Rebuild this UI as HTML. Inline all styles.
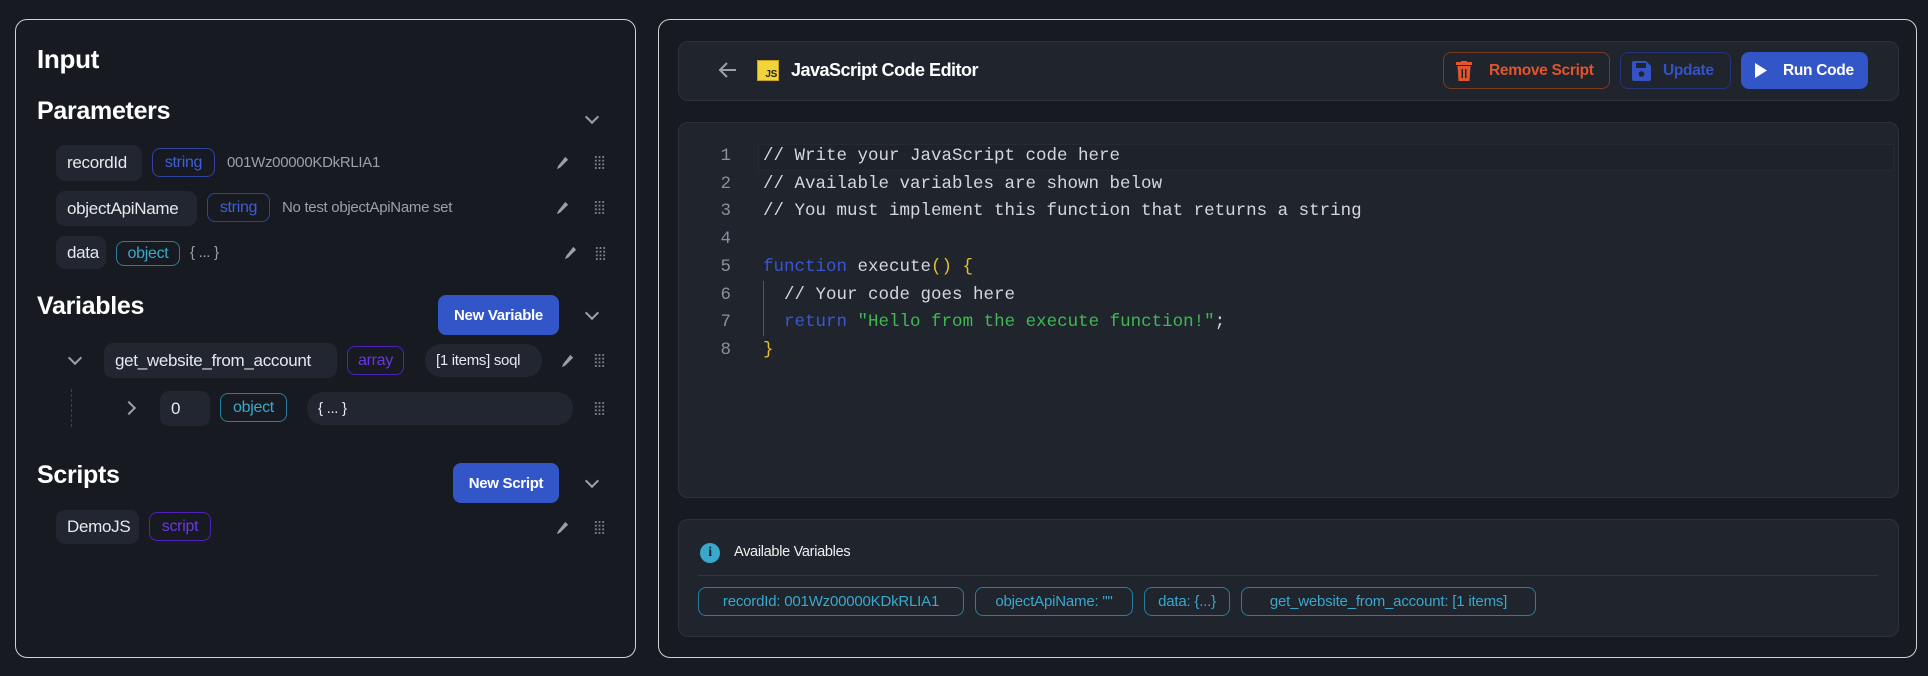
<!DOCTYPE html>
<html><head><meta charset="utf-8"><style>
*{box-sizing:border-box;margin:0;padding:0}
body{width:1928px;height:676px;background:#171a21;font-family:"Liberation Sans Narrow","Liberation Sans",sans-serif;color:#e8eaed;position:relative;overflow:hidden;letter-spacing:-0.3px}
.a{position:absolute}
.panel{position:absolute;border:1px solid #cfd2d6;border-radius:12px}
.h{position:absolute;font-weight:bold;color:#fff;font-size:26px;line-height:1}
.pill{position:absolute;background:#212630;border-radius:9px;font-size:17px;color:#e6e8eb;display:flex;align-items:center;padding-left:11px}
.badge{position:absolute;border:1px solid;border-radius:8px;font-size:16px;display:flex;align-items:center;justify-content:center}
.blue{border-color:#2f44a0;color:#3d5fd8}
.cyan{border-color:#2a7d9c;color:#3aa8cc}
.purp{border-color:#4e22b8;color:#6a38e0}
.val{position:absolute;font-size:15px;color:#9aa0a8}
.btn{position:absolute;background:#3255c8;border-radius:8px;color:#fff;font-weight:bold;font-size:15px;display:flex;align-items:center;justify-content:center}
.chev{position:absolute;width:10px;height:10px;border-right:2px solid #9aa0a8;border-bottom:2px solid #9aa0a8;transform:rotate(45deg)}
.box{position:absolute;background:#1f242d;border:1px solid #2c323c;border-radius:10px}
.code{position:absolute;font-family:"Liberation Mono",monospace;font-size:17.5px;line-height:27.7px;white-space:pre;letter-spacing:0}
.chip{position:absolute;top:587px;height:29px;border:1px solid #2a7d9c;border-radius:8px;color:#3aa8cc;font-size:15px;letter-spacing:-0.2px;display:flex;align-items:center;justify-content:center}
</style></head><body>
<svg width="0" height="0" style="position:absolute"><defs>
<symbol id="pen" viewBox="0 0 16 16"><path d="M11 2l3 3-8.5 8.5L2 15l1.5-3.5z" fill="#9aa0a8"/></symbol>
<symbol id="grip" viewBox="0 0 12 16"><g fill="#7d838c"><rect x="1" y="1" width="2" height="2"/><rect x="5" y="1" width="2" height="2"/><rect x="9" y="1" width="2" height="2"/><rect x="1" y="5" width="2" height="2"/><rect x="5" y="5" width="2" height="2"/><rect x="9" y="5" width="2" height="2"/><rect x="1" y="9" width="2" height="2"/><rect x="5" y="9" width="2" height="2"/><rect x="9" y="9" width="2" height="2"/><rect x="1" y="13" width="2" height="2"/><rect x="5" y="13" width="2" height="2"/><rect x="9" y="13" width="2" height="2"/></g></symbol>
</defs></svg>

<div class="panel" style="left:15px;top:19px;width:621px;height:639px"></div>
<div class="h" style="left:37px;top:46px">Input</div>
<div class="h" style="left:37px;top:99px;font-size:25px">Parameters</div>
<div class="chev" style="left:587px;top:112px"></div>

<div class="pill" style="left:56px;top:145px;width:86px;height:36px">recordId</div>
<div class="badge blue" style="left:152px;top:148px;width:63px;height:29px">string</div>
<div class="val" style="left:227px;top:154px">001Wz00000KDkRLIA1</div>
<svg class="a" style="left:555px;top:155px" width="15" height="15"><use href="#pen"/></svg>
<svg class="a" style="left:594px;top:155px" width="11" height="15"><use href="#grip"/></svg>

<div class="pill" style="left:56px;top:191px;width:141px;height:35px">objectApiName</div>
<div class="badge blue" style="left:207px;top:193px;width:63px;height:29px">string</div>
<div class="val" style="left:282px;top:199px">No test objectApiName set</div>
<svg class="a" style="left:555px;top:200px" width="15" height="15"><use href="#pen"/></svg>
<svg class="a" style="left:594px;top:200px" width="11" height="15"><use href="#grip"/></svg>

<div class="pill" style="left:56px;top:236px;width:50px;height:33px">data</div>
<div class="badge cyan" style="left:116px;top:241px;width:64px;height:25px">object</div>
<div class="val" style="left:190px;top:244px">{ ... }</div>
<svg class="a" style="left:563px;top:245px" width="15" height="15"><use href="#pen"/></svg>
<svg class="a" style="left:595px;top:246px" width="11" height="15"><use href="#grip"/></svg>

<div class="h" style="left:37px;top:294px;font-size:25px">Variables</div>
<div class="btn" style="left:438px;top:295px;width:121px;height:40px">New Variable</div>
<div class="chev" style="left:587px;top:308px"></div>

<div class="chev" style="left:70px;top:353px"></div>
<div class="pill" style="left:104px;top:343px;width:233px;height:35px">get_website_from_account</div>
<div class="badge purp" style="left:347px;top:346px;width:57px;height:29px">array</div>
<div class="pill" style="left:425px;top:344px;width:117px;height:33px;border-radius:16px;font-size:15px">[1 items] soql</div>
<svg class="a" style="left:560px;top:353px" width="15" height="15"><use href="#pen"/></svg>
<svg class="a" style="left:594px;top:353px" width="11" height="15"><use href="#grip"/></svg>

<div class="a" style="left:71px;top:389px;height:38px;border-left:1px dashed #3a3f48"></div>
<div class="chev" style="left:124px;top:403px;transform:rotate(-45deg)"></div>
<div class="pill" style="left:160px;top:391px;width:50px;height:35px">0</div>
<div class="badge cyan" style="left:220px;top:393px;width:67px;height:29px">object</div>
<div class="pill" style="left:307px;top:392px;width:266px;height:33px;border-radius:16px;font-size:15px">{ ... }</div>
<svg class="a" style="left:594px;top:401px" width="11" height="15"><use href="#grip"/></svg>

<div class="h" style="left:37px;top:463px;font-size:25px">Scripts</div>
<div class="btn" style="left:453px;top:463px;width:106px;height:40px">New Script</div>
<div class="chev" style="left:587px;top:476px"></div>

<div class="pill" style="left:56px;top:510px;width:83px;height:34px">DemoJS</div>
<div class="badge purp" style="left:149px;top:512px;width:62px;height:29px">script</div>
<svg class="a" style="left:555px;top:520px" width="15" height="15"><use href="#pen"/></svg>
<svg class="a" style="left:594px;top:520px" width="11" height="15"><use href="#grip"/></svg>

<div class="panel" style="left:658px;top:19px;width:1259px;height:639px"></div>
<div class="box" style="left:678px;top:41px;width:1221px;height:60px"></div>
<svg class="a" style="left:718px;top:61px" width="20" height="18" viewBox="0 0 20 18"><path d="M18 9H3M9 2L2 9l7 7" stroke="#9aa0a8" stroke-width="2" fill="none"/></svg>
<div class="a" style="left:757px;top:60px;width:22px;height:21px;background:#f0d43a;border:1px solid #c9a020"><span style="position:absolute;right:1px;bottom:0;font:bold 10px 'Liberation Sans',sans-serif;color:#222">JS</span></div>
<div class="a" style="left:791px;top:60px;font-weight:bold;font-size:18px;color:#fff;letter-spacing:-0.5px">JavaScript Code Editor</div>

<div class="a" style="left:1443px;top:52px;width:167px;height:37px;border:1px solid #7a3a22;border-radius:8px;color:#e0552e;font-weight:bold;font-size:15.5px;display:flex;align-items:center;padding-left:45px">Remove Script</div>
<svg class="a" style="left:1456px;top:61px" width="16" height="20" viewBox="0 0 16 20"><rect x="0" y="1" width="16" height="3" fill="#e0552e"/><rect x="5" y="0" width="6" height="2" fill="#e0552e"/><path d="M1.5 5h13l-1 15h-11z" fill="#e0552e"/><rect x="5.5" y="8" width="1.5" height="9" fill="#1f242d"/><rect x="9" y="8" width="1.5" height="9" fill="#1f242d"/></svg>
<div class="a" style="left:1620px;top:52px;width:111px;height:37px;border:1px solid #27347a;border-radius:8px;color:#3452c4;font-weight:bold;font-size:15.5px;display:flex;align-items:center;padding-left:42px">Update</div>
<svg class="a" style="left:1632px;top:61px" width="19" height="20" viewBox="0 0 19 20"><path d="M0 2a2 2 0 012-2h12l5 5v13a2 2 0 01-2 2H2a2 2 0 01-2-2z" fill="#3452c4"/><rect x="4" y="2" width="10" height="5" fill="#1f242d"/><circle cx="9.5" cy="13" r="2.8" fill="#1f242d"/></svg>
<div class="btn" style="left:1741px;top:52px;width:127px;height:37px;font-size:15.5px;justify-content:flex-start;padding-left:42px">Run Code</div>
<svg class="a" style="left:1755px;top:63px" width="12" height="15"><path d="M0 0L12 7.5 0 15z" fill="#fff"/></svg>

<div class="box" style="left:678px;top:122px;width:1221px;height:376px"></div>
<div class="a" style="left:758px;top:144px;width:1136px;height:27px;border:1px solid #262b33;background:#1e232b"></div>
<div class="code" style="left:713px;top:143px;color:#8b9099;text-align:right;width:18px">1
2
3
4
5
6
7
8</div>
<div class="a" style="left:763px;top:281px;width:1px;height:55px;background:#7a4a2a"></div>
<div class="code" style="left:763px;top:143px;color:#d4d7dc">// Write your JavaScript code here
// Available variables are shown below
// You must implement this function that returns a string

<span style="color:#3a56d0">function</span> execute<span style="color:#e5c02a">() {</span>
  // Your code goes here
  <span style="color:#3a56d0">return</span> <span style="color:#3fb950">"Hello from the execute function!"</span>;
<span style="color:#e5c02a">}</span></div>

<div class="box" style="left:678px;top:519px;width:1221px;height:118px"></div>
<div class="a" style="left:700px;top:543px;width:20px;height:20px;border-radius:50%;background:#3aa8cc;color:#1f242d;font:bold 14px 'Liberation Serif',serif;text-align:center;line-height:20px">i</div>
<div class="a" style="left:734px;top:544px;font-size:14.5px;color:#f0f0f0">Available Variables</div>
<div class="a" style="left:698px;top:575px;width:1180px;height:1px;background:#323843"></div>
<div class="chip" style="left:698px;width:266px">recordId: 001Wz00000KDkRLIA1</div>
<div class="chip" style="left:975px;width:158px">objectApiName: ""</div>
<div class="chip" style="left:1144px;width:86px">data: {...}</div>
<div class="chip" style="left:1241px;width:295px">get_website_from_account: [1 items]</div>
</body></html>
